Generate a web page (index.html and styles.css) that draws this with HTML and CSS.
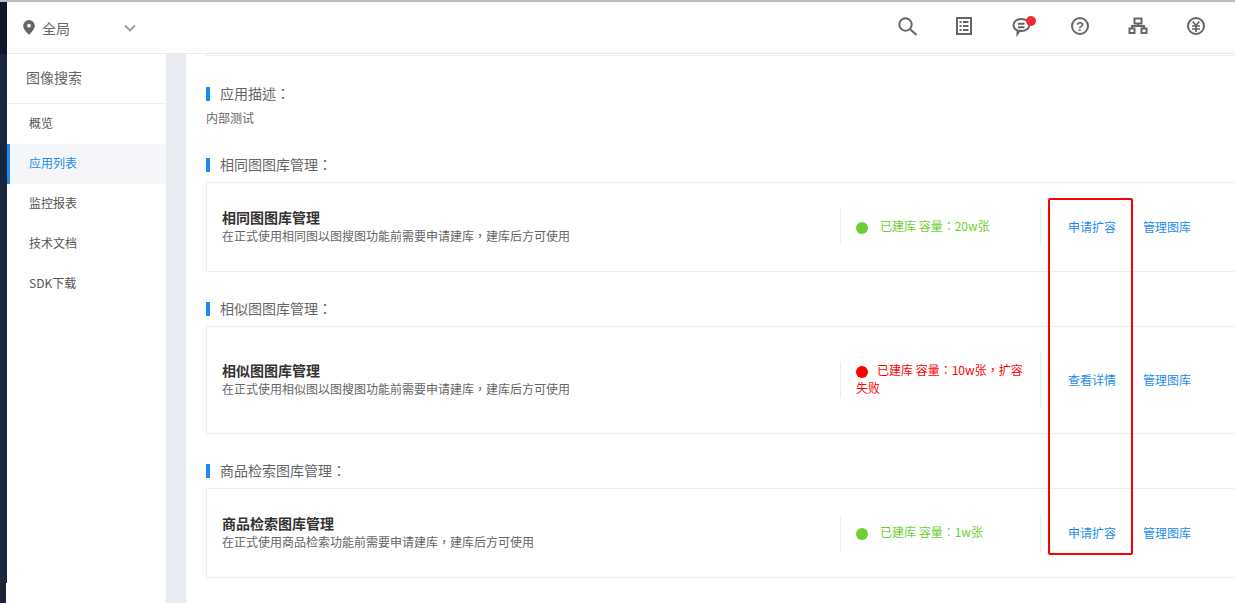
FILE: index.html
```html
<!DOCTYPE html>
<html>
<head>
  <meta charset="UTF-8">
  <title>图像搜索</title>
  <link rel="stylesheet" href="styles.css">
</head>
<body>
  <div class="app">
    <div class="rail">
      <div class="rail-top"></div>
      <div class="rail-mid"></div>
      <div class="rail-end"></div>
    </div>
    <div class="shell">
      <div class="topbar">
        <div class="region">
          <svg class="pin" width="12" height="15" viewBox="0 0 12 15"><path fill="#666" fill-rule="evenodd" d="M6 0a5.800 5.800 0 0 1 5.800 5.800C11.800 9 8 12.800 6 15 4 12.800.2 9 .2 5.800A5.800 5.800 0 0 1 6 0zm0 3.800a1.900 1.900 0 1 0 0 3.800 1.900 1.900 0 0 0 0-3.800z"/></svg>
          <span class="region-name">全局</span>
          <svg class="chevron" width="12" height="8" viewBox="0 0 12 8"><path fill="none" stroke="#999" stroke-width="1.800" d="M1 1.500l5 5 5-5"/></svg>
        </div>
        <div class="tools">
          <svg width="24" height="24" viewBox="0 0 24 24"><g fill="none" stroke="#666" stroke-width="2"><circle cx="11.500" cy="10.500" r="6.200"/><path d="M16 15l6.500 6"/></g></svg>
          <svg width="24" height="24" viewBox="0 0 24 24"><g fill="none" stroke="#666" stroke-width="2"><rect x="5" y="4" width="14" height="16"/><path d="M7.500 8h2M11 8h5.500M7.500 12h2M11 12h5.500M7.500 16h2M11 16h5.500"/></g></svg>
          <span class="tool-badged">
            <svg width="24" height="24" viewBox="0 0 24 24"><g fill="none" stroke="#666" stroke-width="2"><path d="M11.500 5c4.600 0 7.800 2.600 7.800 6s-3.200 6-7.800 6c-.7 0-1.300 0-1.900-.2L7.500 20v-3.500C5 15.500 3.500 13.500 3.500 11c0-3.400 3.400-6 8-6z"/><path d="M8 9.800h6.500M8 13.200h6.500"/></g></svg>
            <span class="badge"></span>
          </span>
          <svg width="24" height="24" viewBox="0 0 24 24"><circle cx="12" cy="12" r="8" fill="none" stroke="#666" stroke-width="2"/><text class="help-mark" x="12" y="16.500" text-anchor="middle">?</text></svg>
          <svg width="24" height="24" viewBox="0 0 24 24"><g fill="none" stroke="#666" stroke-width="2"><rect x="8.500" y="4.500" width="7" height="5"/><rect x="3.500" y="14.500" width="5" height="4.500"/><rect x="15.500" y="14.500" width="5" height="4.500"/><path d="M6 14.500v-2.500h12v2.500M12 9.500V12"/></g></svg>
          <svg width="24" height="24" viewBox="0 0 24 24"><g fill="none" stroke="#666" stroke-width="2"><circle cx="12" cy="12" r="8"/></g><g fill="none" stroke="#666" stroke-width="1.700"><path d="M8.700 7.500L12 11.500l3.300-4M8 12h8M8 15h8M12 11.500V18"/></g></svg>
        </div>
      </div>
      <div class="body">
        <div class="sidebar">
          <div class="sidebar-title">图像搜索</div>
          <div class="menu-item">概览</div>
          <div class="menu-item active">应用列表</div>
          <div class="menu-item">监控报表</div>
          <div class="menu-item">技术文档</div>
          <div class="menu-item">SDK下载</div>
        </div>
        <div class="gutter"></div>
        <div class="main">
          <div class="card-stub"></div>

          <div class="section-title first">应用描述：</div>
          <div class="app-desc">内部测试</div>

          <div class="section-title">相同图图库管理：</div>
          <div class="card">
            <div class="card-info">
              <div class="card-name">相同图图库管理</div>
              <div class="card-desc">在正式使用相同图以图搜图功能前需要申请建库，建库后方可使用</div>
            </div>
            <div class="status ok"><div><span class="dot"></span>已建库 容量：20w张</div></div>
            <div class="ops"><a>申请扩容</a><a>管理图库</a></div>
          </div>

          <div class="section-title">相似图图库管理：</div>
          <div class="card tall">
            <div class="card-info">
              <div class="card-name">相似图图库管理</div>
              <div class="card-desc">在正式使用相似图以图搜图功能前需要申请建库，建库后方可使用</div>
            </div>
            <div class="status fail"><div><span class="dot"></span>已建库 容量：10w张，扩容失败</div></div>
            <div class="ops"><a>查看详情</a><a>管理图库</a></div>
          </div>

          <div class="section-title">商品检索图库管理：</div>
          <div class="card">
            <div class="card-info">
              <div class="card-name">商品检索图库管理</div>
              <div class="card-desc">在正式使用商品检索功能前需要申请建库，建库后方可使用</div>
            </div>
            <div class="status ok"><div><span class="dot"></span>已建库 容量：1w张</div></div>
            <div class="ops"><a>申请扩容</a><a>管理图库</a></div>
          </div>
        </div>
      </div>
    </div>
    <div class="highlight"></div>
  </div>
</body>
</html>
```

FILE: styles.css
```css
html, body {
  margin: 0;
  height: 100%;
  overflow: hidden;
  background: #fff;
}

body {
  font-family: "Noto Sans CJK SC", "Liberation Sans", sans-serif;
  font-size: 12px;
  color: #666;
}

/* the TC cut centres full-width punctuation, as the original UI font does */
.section-title, .card-desc, .status {
  font-family: "Noto Sans CJK TC", "Liberation Sans", sans-serif;
}

.app {
  position: relative;
  display: flex;
  height: 601px;
  border-top: 2px solid #bdbdbd;
}

.rail {
  width: 7px;
  flex: none;
  display: flex;
  flex-direction: column;
}

.rail-top {
  height: 52px;
  background: #10172a;
}

.rail-mid {
  flex: 1;
  background: #1a2540;
}

.rail-end {
  height: 20px;
  width: 6px;
  background: #1c2233;
}

.shell {
  flex: 1;
  min-width: 0;
  display: flex;
  flex-direction: column;
}

.topbar {
  height: 51px;
  flex: none;
  display: flex;
  align-items: center;
  justify-content: space-between;
  border-bottom: 1px solid #e8e8f0;
}

.region {
  display: flex;
  align-items: center;
  padding-left: 16px;
}

.region-name {
  margin-left: 7px;
  font-size: 14px;
  color: #666;
  width: 82px;
}

.chevron {
  margin-top: 1px;
}

.tools {
  display: flex;
  align-items: center;
  gap: 34px;
  padding-right: 27px;
  margin-top: -3px;
}

.tools svg {
  display: block;
}

.help-mark {
  font-family: "Liberation Sans", sans-serif;
  font-size: 13px;
  font-weight: 700;
  fill: #666;
}

.tool-badged {
  position: relative;
  display: block;
}

.badge {
  position: absolute;
  top: 2px;
  right: -2px;
  width: 10px;
  height: 10px;
  border-radius: 50%;
  background: #ee2a33;
}

.body {
  flex: 1;
  min-height: 0;
  display: flex;
}

.sidebar {
  width: 159px;
  flex: none;
}

.sidebar-title {
  height: 49px;
  line-height: 46px;
  padding-left: 19px;
  font-size: 14px;
  color: #666;
  border-bottom: 1px solid #eceef2;
}

.menu-item {
  height: 40px;
  line-height: 38px;
  padding-left: 22px;
  color: #555;
}

.menu-item.active {
  background: #f5f6fa;
  color: #1a8cee;
  box-shadow: inset 3px 0 0 #1a8cee;
}

.gutter {
  width: 20px;
  flex: none;
  background: #e8ebef;
}

.main {
  flex: 1;
  min-width: 0;
  padding-left: 20px;
  overflow: hidden;
}

.card-stub {
  height: 1px;
  border-bottom: 1px solid #eee;
  border-left: 1px solid #eee;
  margin-right: -20px;
}

.section-title {
  position: relative;
  height: 20px;
  line-height: 20px;
  padding-left: 14px;
  margin-top: 26px;
  margin-bottom: 8px;
  font-size: 14px;
  color: #666;
}

.section-title::before {
  content: "";
  position: absolute;
  left: 0;
  top: 4px;
  width: 4px;
  height: 14px;
  background: #1a8cee;
}

.section-title.first {
  margin-top: 27px;
  margin-bottom: 5px;
}

.app-desc {
  line-height: 20px;
  color: #666;
}

.card {
  height: 90px;
  box-sizing: border-box;
  margin-right: -20px;
  border: 1px solid #eee;
  display: flex;
  align-items: center;
  padding-left: 15px;
}

.card.tall {
  height: 108px;
}

.card-info {
  width: 618px;
  flex: none;
}

.card-name {
  font-size: 14px;
  font-weight: 700;
  line-height: 16px;
  margin-bottom: 2px;
  color: #333;
}

.card-desc {
  line-height: 18px;
  color: #666;
}

.status {
  box-sizing: border-box;
  width: 200px;
  height: 36px;
  flex: none;
  display: flex;
  align-items: center;
  padding: 0 16px 2px 15px;
  line-height: 18px;
  border-left: 1px solid #eee;
}

.status.ok {
  color: #6ecf35;
}

.status.fail {
  color: #f00;
}

.dot {
  display: inline-block;
  width: 12px;
  height: 12px;
  border-radius: 50%;
  margin-right: 12px;
  vertical-align: -3px;
}

.ok .dot {
  background: #6ecf35;
}

.fail .dot {
  background: #f00;
  margin-right: 9px;
}

.ops {
  box-sizing: border-box;
  flex: none;
  height: 38px;
  display: flex;
  align-items: center;
  gap: 27px;
  padding: 0 0 2px 27px;
  border-left: 1px solid #eee;
  color: #1a8cee;
}

.tall .ops {
  height: 56px;
}

.highlight {
  position: absolute;
  left: 1048px;
  top: 196px;
  width: 81px;
  height: 353px;
  border: 2px solid #f00;
  border-radius: 2px;
}
```
